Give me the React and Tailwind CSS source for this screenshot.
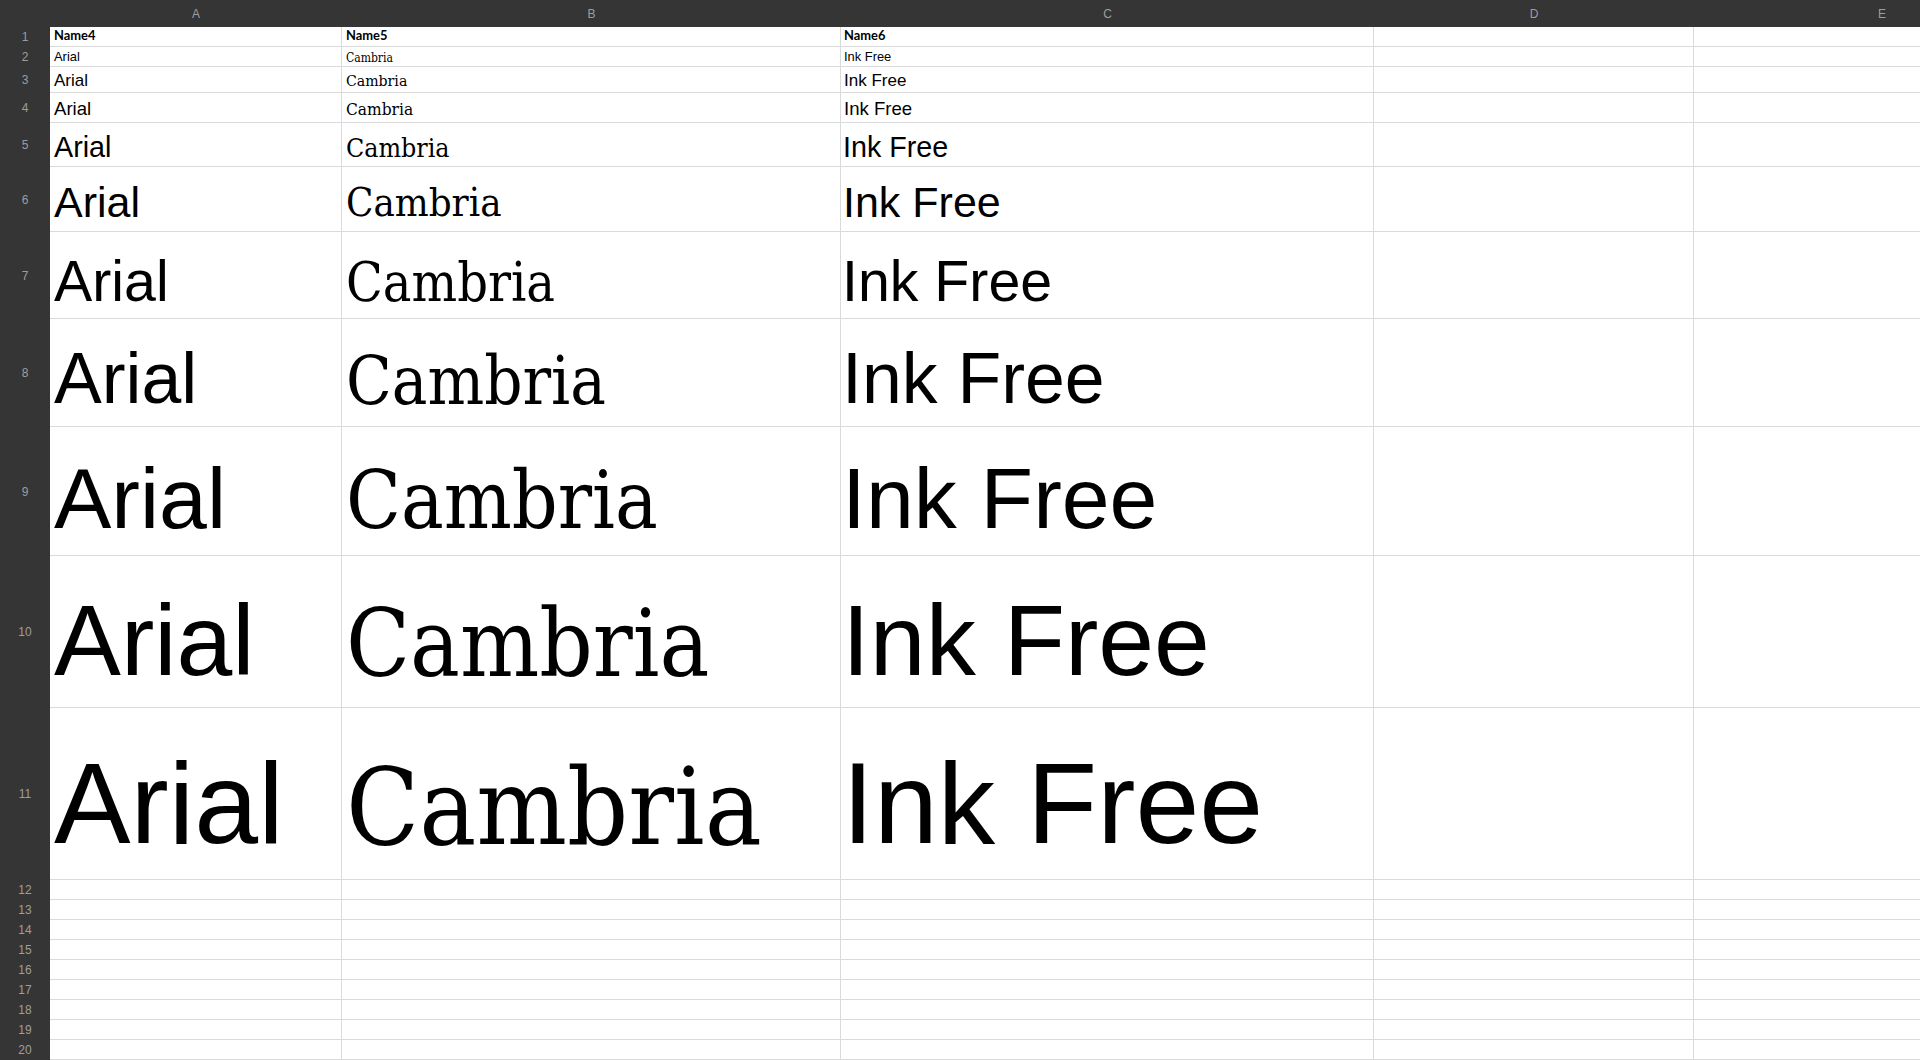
const cols = [
  { key: "A", w: "w-[292px]" },
  { key: "B", w: "w-[499px]" },
  { key: "C", w: "w-[533px]" },
  { key: "D", w: "w-[320px]" },
  { key: "E", w: "w-[376px]" },
];

// one entry per sheet row; sizes follow the "Arial / Cambria / Ink Free" ladder
const rows = [
  { n: 1, h: "h-[20px]", head: true },
  { n: 2, h: "h-[20px]", sans: "text-[12.9px] pb-[2px]", serif: "text-[12px] pb-[2px]", padC: "pl-[3px]" },
  { n: 3, h: "h-[26px]", sans: "text-[17px] pb-[3.5px]", serif: "text-[15.7px] pb-[3.6px]", padC: "pl-[3px]" },
  { n: 4, h: "h-[30px]", sans: "text-[18.6px] pb-[3.4px]", serif: "text-[17.2px] pb-[3.7px]", padC: "pl-[3px]" },
  { n: 5, h: "h-[44px]", sans: "text-[28.7px] pb-[4.6px]", serif: "text-[26.5px] pb-[4.9px]", padC: "pl-[2px]" },
  { n: 6, h: "h-[65px]", sans: "text-[43px] pb-[7.4px]", serif: "text-[39.8px] pb-[7.9px]", padC: "pl-[2px]" },
  { n: 7, h: "h-[87px]", sans: "text-[57.3px] pb-[8.2px]", serif: "text-[53.5px] pb-[8.8px]", padC: "pl-[1px]" },
  { n: 8, h: "h-[108px]", sans: "text-[71.6px] pb-[11px]", serif: "text-[66.5px] pb-[11.8px]", padC: "pl-[1px]" },
  { n: 9, h: "h-[129px]", sans: "text-[86px] pb-[13.8px]", serif: "text-[79.8px] pb-[13.8px]", padC: "pl-[1px]" },
  { n: 10, h: "h-[152px]", sans: "text-[100.3px] pb-[16.6px]", serif: "text-[93px] pb-[15.7px]", padC: "pl-[1px]" },
  { n: 11, h: "h-[172px]", sans: "text-[114.8px] pb-[18.4px]", serif: "text-[106.4px] pb-[18.7px]", padC: "pl-[1px]" },
  ...[12, 13, 14, 15, 16, 17, 18, 19, 20].map((n) => ({ n, h: "h-[20px]", empty: true })),
];

const cell = "shrink-0 flex items-end overflow-hidden whitespace-nowrap border-r border-b border-[#dadada] bg-white";

function Cell({ w, className = "", children }) {
  return <div className={`${cell} ${w} ${className}`}>{children}</div>;
}

function Row({ row }) {
  const [a, b, c, d, e] = cols;
  let A = null, B = null, C = null;
  let padC = "pl-[3px]";

  if (row.head) {
    const hd = "font-['Lato',sans-serif] font-bold text-[12.9px] leading-none pb-[4px] text-black";
    A = <span className={hd}>Name4</span>;
    B = <span className={hd}>Name5</span>;
    C = <span className={hd}>Name6</span>;
  } else if (!row.empty) {
    const sans = `font-['Liberation_Sans',Arial,sans-serif] leading-none text-black ${row.sans}`;
    const serif = `font-['DejaVu_Serif_Condensed','DejaVu_Serif',serif] font-stretch-condensed leading-none text-black ${row.serif}`;
    A = <span className={sans}>Arial</span>;
    B = <span className={serif}>Cambria</span>;
    C = <span className={sans}>Ink Free</span>;
    padC = row.padC;
  }

  return (
    <div className={`flex shrink-0 ${row.h}`}>
      <div className="w-[50px] shrink-0 bg-[#353535] flex items-center justify-center text-[12px] text-[#9e9e9e] font-['Liberation_Sans',sans-serif]">
        {row.n}
      </div>
      <Cell w={a.w} className="pl-[4px]">{A}</Cell>
      <Cell w={b.w} className="pl-[4px]">{B}</Cell>
      <Cell w={c.w} className={padC}>{C}</Cell>
      <Cell w={d.w} />
      <Cell w={e.w} className="border-r-0" />
    </div>
  );
}

export default function App() {
  return (
    <div className="w-[1920px] h-[1060px] overflow-hidden bg-white flex flex-col">
      <div className="flex shrink-0 h-[27px] bg-[#353535] text-[12px] text-[#9e9e9e] font-['Liberation_Sans',sans-serif]">
        <div className="w-[50px] shrink-0" />
        {cols.map((col) => (
          <div key={col.key} className={`${col.w} shrink-0 flex items-center justify-center`}>
            {col.key}
          </div>
        ))}
      </div>
      {rows.map((row) => (
        <Row key={row.n} row={row} />
      ))}
    </div>
  );
}
